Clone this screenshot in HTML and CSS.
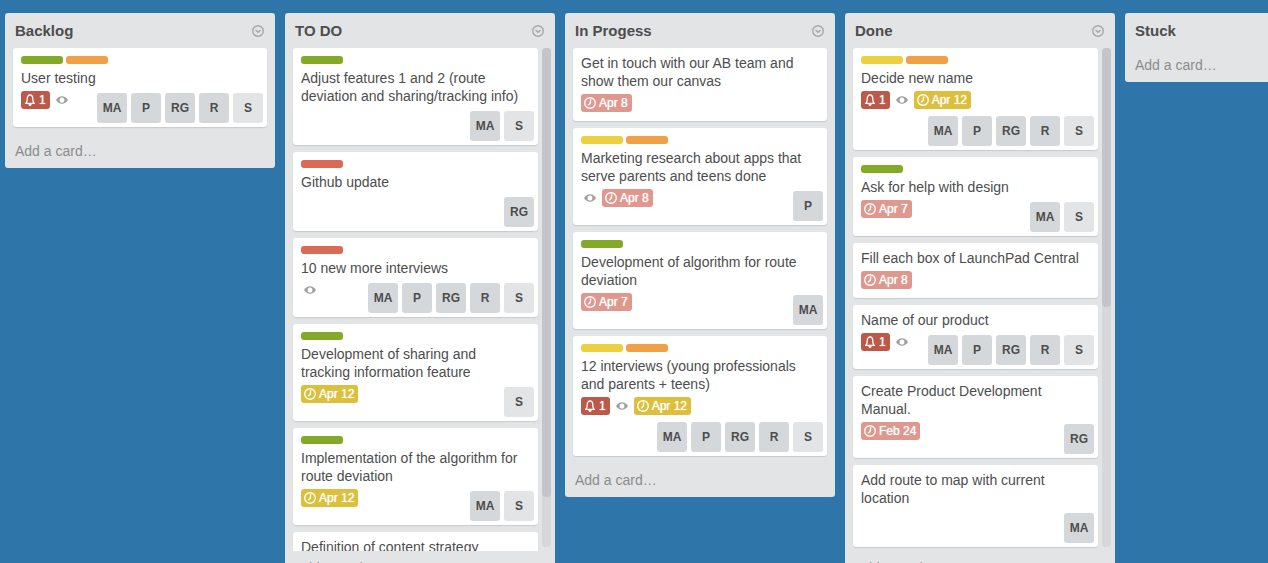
FILE: index.html
```html
<!DOCTYPE html>
<html lang="en">
<head>
    <meta charset="UTF-8">
    <meta name="viewport" content="width=device-width, initial-scale=1.0">
    <title>Project board</title>
    <link rel="stylesheet" href="styles.css">
</head>
<body>
    <!-- Shared icons -->
    <svg class="icon-defs" aria-hidden="true">
        <symbol id="icon-menu" viewBox="0 0 12 12">
            <circle cx="6" cy="6" r="5.3" fill="none" stroke="currentColor" stroke-width="1.4"/>
            <path d="M3.5 5l2.500 2.200L8.500 5" fill="none" stroke="currentColor" stroke-width="1.4"/>
        </symbol>
        <symbol id="icon-bell" viewBox="0 0 12 12">
            <path d="M1 9.300h10M2 9.200C3.200 8 3.200 6.800 3.200 5 3.200 2.400 4.300 1 6 1s2.800 1.400 2.800 4c0 1.800 0 3 1.200 4.200" fill="none" stroke="currentColor" stroke-width="1.300"/>
            <path d="M4.400 10h3.200c0 1.200-.6 2-1.600 2s-1.600-.8-1.600-2z" fill="currentColor"/>
        </symbol>
        <symbol id="icon-eye" viewBox="0 0 12 12">
            <path fill="currentColor" fill-rule="evenodd" d="M0 6C1.600 3.400 3.600 2.200 6 2.200S10.400 3.400 12 6C10.400 8.600 8.400 9.800 6 9.800S1.600 8.600 0 6zM3.600 6a2.400 2.600 0 1 0 4.800 0a2.400 2.600 0 1 0-4.800 0z"/>
        </symbol>
        <symbol id="icon-clock" viewBox="0 0 12 12">
            <circle cx="6" cy="6" r="5.300" fill="none" stroke="currentColor" stroke-width="1.400"/>
            <path d="M6.700 2.400L6.300 6.200 4.200 8.300" fill="none" stroke="currentColor" stroke-width="1.400"/>
        </symbol>
    </svg>

    <main class="board">
        <!-- Backlog -->
        <section class="list">
            <header class="list-header">
                <h2>Backlog</h2>
                <button class="list-menu" aria-label="List actions"><svg><use href="#icon-menu"/></svg></button>
            </header>
            <div class="list-body">
                <div class="cards">
                    <article class="card">
                        <div class="labels"><span class="label green"></span><span class="label orange"></span></div>
                        <a class="card-title" href="#">User testing</a>
                        <div class="card-footer">
                            <div class="badges">
                                <span class="badge alert"><svg><use href="#icon-bell"/></svg>1</span>
                                <span class="badge watch"><svg><use href="#icon-eye"/></svg></span>
                            </div>
                            <div class="members">
                                <button class="member">MA</button>
                                <button class="member">P</button>
                                <button class="member">RG</button>
                                <button class="member">R</button>
                                <button class="member light">S</button>
                            </div>
                        </div>
                    </article>
                </div>
            </div>
            <a class="add-card" href="#">Add a card…</a>
        </section>

        <!-- To do -->
        <section class="list">
            <header class="list-header">
                <h2>TO DO</h2>
                <button class="list-menu" aria-label="List actions"><svg><use href="#icon-menu"/></svg></button>
            </header>
            <div class="list-body scrollable">
                <div class="cards">
                    <article class="card">
                        <div class="labels"><span class="label green"></span></div>
                        <a class="card-title" href="#">Adjust features 1 and 2 (route deviation and sharing/tracking info)</a>
                        <div class="card-footer">
                            <div class="members">
                                <button class="member">MA</button>
                                <button class="member light">S</button>
                            </div>
                        </div>
                    </article>
                    <article class="card">
                        <div class="labels"><span class="label red"></span></div>
                        <a class="card-title" href="#">Github update</a>
                        <div class="card-footer">
                            <div class="members">
                                <button class="member">RG</button>
                            </div>
                        </div>
                    </article>
                    <article class="card">
                        <div class="labels"><span class="label red"></span></div>
                        <a class="card-title" href="#">10 new more interviews</a>
                        <div class="card-footer">
                            <div class="badges">
                                <span class="badge watch"><svg><use href="#icon-eye"/></svg></span>
                            </div>
                            <div class="members">
                                <button class="member">MA</button>
                                <button class="member">P</button>
                                <button class="member">RG</button>
                                <button class="member">R</button>
                                <button class="member light">S</button>
                            </div>
                        </div>
                    </article>
                    <article class="card">
                        <div class="labels"><span class="label green"></span></div>
                        <a class="card-title" href="#">Development of sharing and tracking information feature</a>
                        <div class="card-footer">
                            <div class="badges">
                                <span class="badge due-soon"><svg><use href="#icon-clock"/></svg>Apr 12</span>
                            </div>
                            <div class="members">
                                <button class="member light">S</button>
                            </div>
                        </div>
                    </article>
                    <article class="card">
                        <div class="labels"><span class="label green"></span></div>
                        <a class="card-title" href="#">Implementation of the algorithm for route deviation</a>
                        <div class="card-footer">
                            <div class="badges">
                                <span class="badge due-soon"><svg><use href="#icon-clock"/></svg>Apr 12</span>
                            </div>
                            <div class="members">
                                <button class="member">MA</button>
                                <button class="member light">S</button>
                            </div>
                        </div>
                    </article>
                    <article class="card">
                        <a class="card-title" href="#">Definition of content strategy</a>
                    </article>
                </div>
                <div class="scrollbar"><div class="thumb" style="height: 90%"></div></div>
            </div>
            <a class="add-card" href="#">Add a card…</a>
        </section>

        <!-- In progress -->
        <section class="list">
            <header class="list-header">
                <h2>In Progess</h2>
                <button class="list-menu" aria-label="List actions"><svg><use href="#icon-menu"/></svg></button>
            </header>
            <div class="list-body">
                <div class="cards">
                    <article class="card">
                        <a class="card-title" href="#">Get in touch with our AB team and show them our canvas</a>
                        <div class="card-footer">
                            <div class="badges">
                                <span class="badge overdue"><svg><use href="#icon-clock"/></svg>Apr 8</span>
                            </div>
                        </div>
                    </article>
                    <article class="card">
                        <div class="labels"><span class="label yellow"></span><span class="label orange"></span></div>
                        <a class="card-title" href="#">Marketing research about apps that serve parents and teens done</a>
                        <div class="card-footer">
                            <div class="badges">
                                <span class="badge watch"><svg><use href="#icon-eye"/></svg></span>
                                <span class="badge overdue"><svg><use href="#icon-clock"/></svg>Apr 8</span>
                            </div>
                            <div class="members">
                                <button class="member">P</button>
                            </div>
                        </div>
                    </article>
                    <article class="card">
                        <div class="labels"><span class="label green"></span></div>
                        <a class="card-title" href="#">Development of algorithm for route deviation</a>
                        <div class="card-footer">
                            <div class="badges">
                                <span class="badge overdue"><svg><use href="#icon-clock"/></svg>Apr 7</span>
                            </div>
                            <div class="members">
                                <button class="member">MA</button>
                            </div>
                        </div>
                    </article>
                    <article class="card">
                        <div class="labels"><span class="label yellow"></span><span class="label orange"></span></div>
                        <a class="card-title" href="#">12 interviews (young professionals and parents + teens)</a>
                        <div class="card-footer">
                            <div class="badges">
                                <span class="badge alert"><svg><use href="#icon-bell"/></svg>1</span>
                                <span class="badge watch"><svg><use href="#icon-eye"/></svg></span>
                                <span class="badge due-soon"><svg><use href="#icon-clock"/></svg>Apr 12</span>
                            </div>
                            <div class="members">
                                <button class="member">MA</button>
                                <button class="member">P</button>
                                <button class="member">RG</button>
                                <button class="member">R</button>
                                <button class="member light">S</button>
                            </div>
                        </div>
                    </article>
                </div>
            </div>
            <a class="add-card" href="#">Add a card…</a>
        </section>

        <!-- Done -->
        <section class="list">
            <header class="list-header">
                <h2>Done</h2>
                <button class="list-menu" aria-label="List actions"><svg><use href="#icon-menu"/></svg></button>
            </header>
            <div class="list-body scrollable">
                <div class="cards">
                    <article class="card">
                        <div class="labels"><span class="label yellow"></span><span class="label orange"></span></div>
                        <a class="card-title" href="#">Decide new name</a>
                        <div class="card-footer">
                            <div class="badges">
                                <span class="badge alert"><svg><use href="#icon-bell"/></svg>1</span>
                                <span class="badge watch"><svg><use href="#icon-eye"/></svg></span>
                                <span class="badge due-soon"><svg><use href="#icon-clock"/></svg>Apr 12</span>
                            </div>
                            <div class="members">
                                <button class="member">MA</button>
                                <button class="member">P</button>
                                <button class="member">RG</button>
                                <button class="member">R</button>
                                <button class="member light">S</button>
                            </div>
                        </div>
                    </article>
                    <article class="card">
                        <div class="labels"><span class="label green"></span></div>
                        <a class="card-title" href="#">Ask for help with design</a>
                        <div class="card-footer">
                            <div class="badges">
                                <span class="badge overdue"><svg><use href="#icon-clock"/></svg>Apr 7</span>
                            </div>
                            <div class="members">
                                <button class="member">MA</button>
                                <button class="member light">S</button>
                            </div>
                        </div>
                    </article>
                    <article class="card">
                        <a class="card-title" href="#">Fill each box of LaunchPad Central</a>
                        <div class="card-footer">
                            <div class="badges">
                                <span class="badge overdue"><svg><use href="#icon-clock"/></svg>Apr 8</span>
                            </div>
                        </div>
                    </article>
                    <article class="card">
                        <a class="card-title" href="#">Name of our product</a>
                        <div class="card-footer">
                            <div class="badges">
                                <span class="badge alert"><svg><use href="#icon-bell"/></svg>1</span>
                                <span class="badge watch"><svg><use href="#icon-eye"/></svg></span>
                            </div>
                            <div class="members">
                                <button class="member">MA</button>
                                <button class="member">P</button>
                                <button class="member">RG</button>
                                <button class="member">R</button>
                                <button class="member light">S</button>
                            </div>
                        </div>
                    </article>
                    <article class="card">
                        <a class="card-title" href="#">Create Product Development Manual.</a>
                        <div class="card-footer">
                            <div class="badges">
                                <span class="badge overdue"><svg><use href="#icon-clock"/></svg>Feb 24</span>
                            </div>
                            <div class="members">
                                <button class="member">RG</button>
                            </div>
                        </div>
                    </article>
                    <article class="card">
                        <a class="card-title" href="#">Add route to map with current location</a>
                        <div class="card-footer">
                            <div class="members">
                                <button class="member">MA</button>
                            </div>
                        </div>
                    </article>
                </div>
                <div class="scrollbar"><div class="thumb" style="height: 52%"></div></div>
            </div>
            <a class="add-card" href="#">Add a card…</a>
        </section>

        <!-- Stuck -->
        <section class="list">
            <header class="list-header">
                <h2>Stuck</h2>
                <button class="list-menu" aria-label="List actions"><svg><use href="#icon-menu"/></svg></button>
            </header>
            <a class="add-card" href="#">Add a card…</a>
        </section>
    </main>
</body>
</html>
```

FILE: styles.css
```css
* {
    box-sizing: border-box;
}

body, html {
    margin: 0;
    height: 100%;
    overflow: hidden;
}

body {
    background-color: #2e76aa;
    color: #4d4d4d;
    font-family: "Liberation Sans", Arial, sans-serif;
    font-size: 14px;
    line-height: 18px;
}

a {
    color: inherit;
    text-decoration: none;
}

button {
    border: none;
    padding: 0;
    font-family: inherit;
    cursor: pointer;
}

svg {
    display: block;
    width: 12px;
    height: 12px;
}

.icon-defs {
    display: none;
}

/* Board and lists */
.board {
    display: flex;
    align-items: flex-start;
    gap: 10px;
    height: 100%;
    padding: 13px 5px 0;
    overflow: hidden;
}

.list {
    flex: 0 0 270px;
    background-color: #e2e4e6;
    border-radius: 3px;
}

.list-header {
    display: flex;
    justify-content: space-between;
    align-items: center;
    height: 35px;
    padding: 0 11px 0 10px;
}

.list-header h2 {
    margin: 0;
    font-size: 15px;
}

.list-menu {
    background: none;
    color: #a6a6a6;
}

.list-body {
    display: flex;
    gap: 4px;
    max-height: calc(100vh - 60px);
    padding: 0 8px;
    overflow: hidden;
}

.list-body.scrollable {
    padding-right: 4px;
}

.cards {
    flex: 1;
    min-width: 0;
}

.scrollbar {
    width: 9px;
    margin-bottom: 4px;
    background-color: #d5d7d9;
    border-radius: 4px;
}

.thumb {
    background-color: #c3c5c8;
    border-radius: 4px;
}

.add-card {
    display: block;
    padding: 8px 10px;
    color: #8c8c8c;
}

/* Cards */
.card {
    margin-bottom: 7px;
    padding: 6px 8px 8px;
    background-color: #fff;
    border-radius: 3px;
    box-shadow: 0 1px 1px #c8cacc;
}

.labels {
    display: flex;
    gap: 3px;
    padding: 2px 0 5px;
}

.label {
    width: 42px;
    height: 8px;
    border-radius: 3px;
}

.label.green {
    background-color: #82aa28;
}

.label.yellow {
    background-color: #edd040;
}

.label.orange {
    background-color: #f2a047;
}

.label.red {
    background-color: #da6a54;
}

.card-title {
    display: block;
    padding-right: 4px;
}

.card-footer {
    display: flex;
    flex-wrap: wrap;
    align-items: flex-start;
    margin-right: -4px;
}

.badges {
    display: flex;
    gap: 3px;
    margin: 4px 0 1px;
}

.badge {
    display: flex;
    align-items: center;
    gap: 3px;
    height: 18px;
    padding: 0 4px 0 3px;
    border-radius: 3px;
    color: #fff;
    font-size: 12px;
    text-shadow: 0 0 1px #fff;
}

.badge.alert {
    background-color: #bd5949;
}

.badge.due-soon {
    background-color: #dcc03c;
}

.badge.overdue {
    background-color: #df988d;
}

.badge.watch {
    padding: 0 3px;
    color: #a0a0a0;
}

.members {
    display: flex;
    gap: 4px;
    margin: 6px 0 -4px auto;
}

.member {
    width: 30px;
    height: 30px;
    background-color: #d5d8da;
    border-radius: 3px;
    color: #4d4d4d;
    font-size: 12px;
    font-weight: bold;
}

.member.light {
    background-color: #e2e4e6;
}
```
